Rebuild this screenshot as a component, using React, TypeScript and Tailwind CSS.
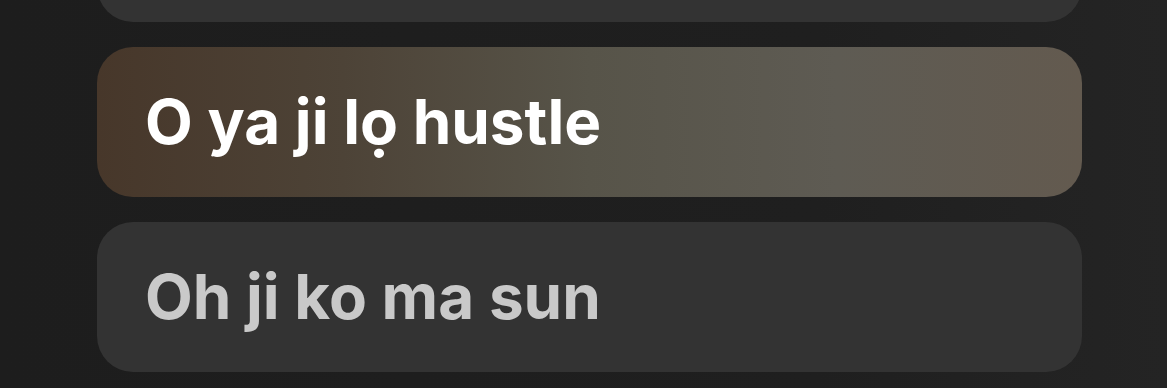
import React from "react";

export default function App() {
  return (
    <div
      className="w-[1167px] h-[388px] overflow-hidden bg-[linear-gradient(90deg,#1d1d1d_0%,#1f1f1f_70%,#242424_100%)] flex flex-col justify-end gap-[25px] pb-[16px] pl-[97px]"
      style={{ fontFamily: "Inter, 'Noto Sans', sans-serif" }}
    >
      <div className="w-[985px] h-[150px] shrink-0 rounded-[36px] bg-[#333333]" />
      <div className="w-[985px] h-[150px] shrink-0 rounded-[36px] bg-[linear-gradient(90deg,#47372a_0%,#4d4337_25%,#575449_50%,#5e5b53_75%,#635a4f_100%)] flex items-center pl-[48px]">
        <span className="text-[62px] font-bold text-white tracking-normal leading-none">O ya ji lọ hustle</span>
      </div>
      <div className="w-[985px] h-[150px] shrink-0 rounded-[36px] bg-[#333333] flex items-center pl-[48px]">
        <span className="text-[62px] font-bold text-[#c9c9c9] tracking-normal leading-none">Oh ji ko ma sun</span>
      </div>
    </div>
  );
}
